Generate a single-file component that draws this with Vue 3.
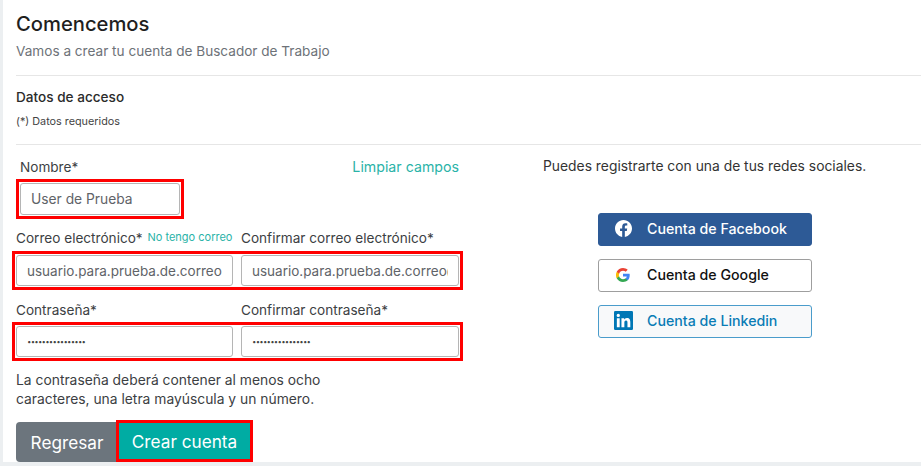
<template>
  <div class="pagina">
    <main class="tarjeta">
      <header class="cabecera">
        <h1>Comencemos</h1>
        <p>Vamos a crear tu cuenta de Buscador de Trabajo</p>
      </header>
      <section class="seccion">
        <h2>Datos de acceso</h2>
        <small>(*) Datos requeridos</small>
      </section>
      <div class="cuerpo">
        <form class="formulario" @submit.prevent>
          <div class="fila-nombre">
            <label>Nombre*</label>
            <a class="limpiar">Limpiar campos</a>
          </div>
          <div class="marca marca-nombre">
            <input class="campo" type="text" value="User de Prueba" />
          </div>
          <div class="etiquetas etiquetas-correo">
            <label>Correo electrónico* <a class="sin-correo">No tengo correo</a></label>
            <label>Confirmar correo electrónico*</label>
          </div>
          <div class="marca doble">
            <input class="campo" type="text" value="usuario.para.prueba.de.correo@mail.com" />
            <input class="campo" type="text" value="usuario.para.prueba.de.correo@mail.com" />
          </div>
          <div class="etiquetas etiquetas-clave">
            <label>Contraseña*</label>
            <label>Confirmar contraseña*</label>
          </div>
          <div class="marca doble">
            <input class="campo clave" type="text" value="················" />
            <input class="campo clave" type="text" value="················" />
          </div>
          <p class="ayuda">La contraseña deberá contener al menos ocho<br />caracteres, una letra mayúscula y un número.</p>
          <div class="acciones">
            <button type="button" class="regresar">Regresar</button>
            <button type="submit" class="crear">Crear cuenta</button>
          </div>
        </form>
        <aside class="redes">
          <p>Puedes registrarte con una de tus redes sociales.</p>
          <div class="botones">
            <button type="button" class="social facebook">
              <span class="icono">
                <svg width="17" height="17" viewBox="0 0 24 24"><path fill="#fff" d="M24 12.07C24 5.4 18.63 0 12 0S0 5.4 0 12.07c0 6.03 4.39 11.02 10.13 11.93v-8.44H7.08v-3.49h3.05V9.41c0-3.02 1.79-4.69 4.53-4.69 1.31 0 2.69.24 2.69.24v2.97h-1.51c-1.49 0-1.96.93-1.96 1.89v2.25h3.33l-.53 3.49h-2.8V24C19.61 23.09 24 18.1 24 12.07z"/></svg>
              </span>
              Cuenta de Facebook
            </button>
            <button type="button" class="social google">
              <span class="icono">
                <svg width="14" height="14" viewBox="0 0 24 24">
                  <path fill="#4285f4" d="M23.5 12.3c0-.9-.1-1.6-.2-2.3H12v4.5h6.5c-.3 1.5-1.1 2.8-2.4 3.7v3h3.9c2.2-2.1 3.5-5.2 3.5-8.9z"/>
                  <path fill="#34a853" d="M12 24c3.2 0 6-1.1 8-2.9l-3.9-3c-1.1.7-2.4 1.2-4.1 1.2-3.1 0-5.8-2.1-6.7-5H1.3v3.1C3.3 21.3 7.3 24 12 24z"/>
                  <path fill="#fbbc05" d="M5.3 14.3c-.5-1.5-.5-3.1 0-4.6V6.6h-4a12 12 0 0 0 0 10.8l4-3.1z"/>
                  <path fill="#ea4335" d="M12 4.8c1.8 0 3.4.6 4.6 1.8l3.5-3.5C18 1.200 15.200 0 12 0 7.300 0 3.300 2.700 1.300 6.600l4 3.100c1-2.900 3.600-4.900 6.700-4.900z"/>
                </svg>
              </span>
              Cuenta de Google
            </button>
            <button type="button" class="social linkedin">
              <span class="icono">
                <svg width="19" height="19" viewBox="0 0 24 24">
                  <rect width="24" height="24" rx="1.500" fill="#0077b5"/>
                  <path fill="#fff" d="M3.600 9h3.600v11.400H3.600zM5.400 3.500a2.100 2.100 0 1 1 0 4.200 2.100 2.100 0 0 1 0-4.200zM9.400 9h3.400v1.600h.1c.5-.9 1.600-1.900 3.400-1.900 3.600 0 4.300 2.400 4.300 5.500v6.200H17v-5.500c0-1.300 0-3-1.800-3s-2.100 1.400-2.100 2.900v5.600H9.400z"/>
                </svg>
              </span>
              Cuenta de Linkedin
            </button>
          </div>
        </aside>
      </div>
    </main>
  </div>
</template>

<script setup>
</script>

<style>
html, body {
  margin: 0;
  background: #fff;
}
</style>

<style scoped>
.pagina {
  width: 921px;
  height: 466px;
  overflow: hidden;
  box-sizing: border-box;
  border-left: 3px solid #eceff1;
  border-bottom: 4px solid #eceff1;
  font-family: Inter, "Open Sans", sans-serif;
  color: #3c4043;
}
.tarjeta {
  padding: 0 0 0 13px;
}
.cabecera {
  height: 76px;
  box-sizing: border-box;
  padding-top: 12px;
  border-bottom: 1px solid #e6e6e6;
}
h1 {
  margin: 0;
  font-size: 20.2px;
  line-height: 24px;
  font-weight: 500;
  color: #1f1f1f;
}
.cabecera p {
  margin: 4px 0 0;
  font-size: 13.6px;
  line-height: 22px;
  color: #6d7278;
}
.seccion {
  height: 69px;
  box-sizing: border-box;
  padding-top: 12px;
  border-bottom: 1px solid #e6e6e6;
}
h2 {
  margin: 0;
  font-size: 13.6px;
  line-height: 18px;
  font-weight: 500;
  color: #2b2b2b;
}
small {
  display: block;
  margin-top: 9px;
  font-size: 10.8px;
  line-height: 14px;
  color: #444;
}
.cuerpo {
  display: flex;
}
.formulario {
  width: 443px;
}
.fila-nombre {
  display: flex;
  justify-content: space-between;
  height: 38px;
  padding: 13px 0 0 4px;
  box-sizing: border-box;
  font-size: 13.6px;
  line-height: 18px;
}
.limpiar {
  color: #2ab3a8;
  font-size: 14.2px;
}
.marca {
  outline: 3px solid #f00;
  outline-offset: 1px;
}
.marca-nombre {
  width: 160px;
  margin-left: 4px;
}
.doble {
  display: grid;
  grid-template-columns: 217px 218px;
  gap: 8px;
  width: 443px;
}
.campo {
  display: block;
  width: 100%;
  height: 31px;
  box-sizing: border-box;
  padding: 0 10px;
  border: 1px solid #b5b5b5;
  border-radius: 3px;
  background: #fff;
  font: 13.5px Inter, "Open Sans", sans-serif;
  color: #5f6368;
}
.marca-nombre .campo {
  height: 32px;
  font-size: 13.8px;
}
.clave {
  font-weight: 700;
  font-size: 13.3px;
  letter-spacing: -0.8px;
  color: #444;
}
.etiquetas {
  display: grid;
  grid-template-columns: 217px 218px;
  gap: 8px;
  align-items: end;
  font-size: 13.6px;
  line-height: 18px;
  white-space: nowrap;
}
.etiquetas-correo {
  height: 40px;
  padding-bottom: 8px;
  box-sizing: border-box;
}
.etiquetas-clave {
  height: 40px;
  padding-bottom: 7px;
  box-sizing: border-box;
}
.sin-correo {
  margin-left: 1px;
  font-size: 11px;
  color: #2ab3a8;
  vertical-align: 2px;
}
.ayuda {
  margin: 14px 0 0;
  font-size: 13.85px;
  line-height: 19px;
  color: #3c4043;
}
.acciones {
  display: flex;
  align-items: flex-end;
  margin-top: 11px;
}
.acciones button {
  border: 0;
  font: 17.2px Inter, "Open Sans", sans-serif;
  color: #fff;
  padding: 0;
}
.regresar {
  width: 102px;
  height: 40px;
  background: #6c757d;
  border-radius: 4px 0 0 4px;
}
.acciones .crear {
  width: 137px;
  height: 42px;
  margin-left: -2px;
  box-sizing: border-box;
  background: #00aca3;
  border: 3px solid #f00;
  position: relative;
}
.redes {
  flex: 1;
  padding-left: 84px;
}
.redes p {
  margin: 12px 0 0;
  font-size: 13.85px;
  line-height: 18px;
  color: #333;
}
.botones {
  display: flex;
  flex-direction: column;
  gap: 13px;
  margin: 38px 0 0 55px;
  width: 214px;
}
.social {
  display: flex;
  align-items: center;
  height: 33px;
  padding: 0 0 2px;
  box-sizing: border-box;
  border-radius: 3px;
  font: 500 14.2px Inter, "Open Sans", sans-serif;
}
.icono {
  display: flex;
  justify-content: center;
  width: 48px;
  flex: none;
}
.facebook {
  background: #2d5a96;
  border: 1px solid #2d5a96;
  color: #fff;
}
.google {
  background: #fff;
  border: 1px solid #9e9e9e;
  color: #111;
}
.linkedin {
  background: #f8f9fa;
  border: 1px solid #4a9ccb;
  color: #0a7cb5;
}
</style>
